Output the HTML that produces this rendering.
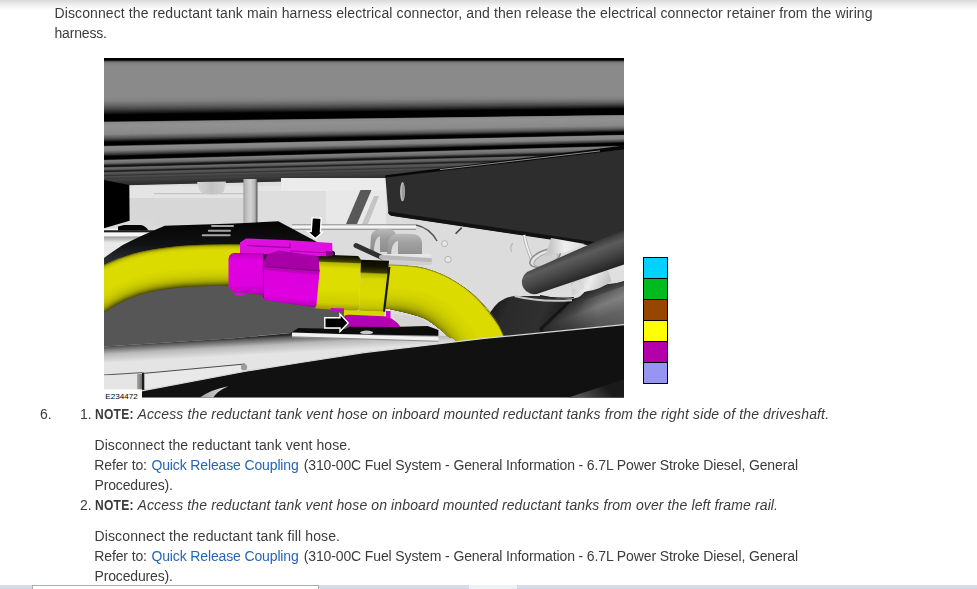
<!DOCTYPE html>
<html><head><meta charset="utf-8">
<style>
html,body{margin:0;padding:0;background:#fff;}
body{width:977px;height:589px;position:relative;overflow:hidden;font-family:"Liberation Sans",sans-serif;font-size:14px;color:#3b3b3b;}
.topshade{position:absolute;left:0;top:0;width:977px;height:11px;background:linear-gradient(#d9d9d9,#e7e7e7 27%,#f4f4f4 55%,#fcfcfc 82%,#fff);}
.t{position:absolute;white-space:nowrap;line-height:20px;height:20px;}
a{color:#2465b6;text-decoration:none;}
b{font-weight:bold;}
#fig{position:absolute;left:0;top:0;width:977px;height:589px;}
.sw{position:absolute;left:643px;width:23px;height:20px;border:1px solid #000;box-sizing:content-box;}
.bot{position:absolute;top:585px;height:4px;background:#d3dce7;}
#txt{position:absolute;left:0;top:0;width:977px;height:589px;will-change:transform;transform:translateZ(0);}
</style></head><body>
<div class="topshade"></div>
<svg id="fig" width="977" height="589" viewBox="0 0 977 589">
<defs><linearGradient id="g1" gradientUnits="userSpaceOnUse" x1="197.00" y1="0.00" x2="226.00" y2="0.00"><stop offset="0" stop-color="#d4d4d4"/><stop offset="0.5" stop-color="#c2c2c2"/><stop offset="1" stop-color="#d0d0d0"/></linearGradient><linearGradient id="g2" gradientUnits="userSpaceOnUse" x1="0.00" y1="236.50" x2="0.00" y2="242.50"><stop offset="0" stop-color="#9a9a9a"/><stop offset="1" stop-color="#e9e9e9"/></linearGradient><linearGradient id="g3" gradientUnits="userSpaceOnUse" x1="243.40" y1="0.00" x2="257.40" y2="0.00"><stop offset="0" stop-color="#9c9c9c"/><stop offset="0.15" stop-color="#b8b8b8"/><stop offset="0.5" stop-color="#d4d4d4"/><stop offset="0.82" stop-color="#b4b4b4"/><stop offset="0.92" stop-color="#808080"/><stop offset="1" stop-color="#3a3a3a"/></linearGradient><linearGradient id="g4" gradientUnits="userSpaceOnUse" x1="0.00" y1="225.00" x2="0.00" y2="262.00"><stop offset="0" stop-color="#060606"/><stop offset="0.55" stop-color="#111214"/><stop offset="1" stop-color="#2c2f36"/></linearGradient><linearGradient id="g5" gradientUnits="userSpaceOnUse" x1="0.00" y1="229.00" x2="0.00" y2="255.00"><stop offset="0" stop-color="#b8b8b8"/><stop offset="0.4" stop-color="#9a9a9a"/><stop offset="1" stop-color="#8a8a8a"/></linearGradient><linearGradient id="g6" gradientUnits="userSpaceOnUse" x1="0.00" y1="233.00" x2="0.00" y2="256.00"><stop offset="0" stop-color="#bcbcbc"/><stop offset="0.4" stop-color="#a2a2a2"/><stop offset="1" stop-color="#8e8e8e"/></linearGradient><linearGradient id="g7" gradientUnits="userSpaceOnUse" x1="551.00" y1="0.00" x2="585.00" y2="0.00"><stop offset="0" stop-color="#c8c8c8"/><stop offset="0.4" stop-color="#f0f0f0"/><stop offset="1" stop-color="#d8d8d8"/></linearGradient><linearGradient id="g8" gradientUnits="userSpaceOnUse" x1="490.00" y1="300.00" x2="560.00" y2="330.00"><stop offset="0" stop-color="#141414"/><stop offset="0.25" stop-color="#2a2a2a"/><stop offset="0.7" stop-color="#303030"/><stop offset="1" stop-color="#1a1a1a"/></linearGradient><linearGradient id="g9" gradientUnits="userSpaceOnUse" x1="588.00" y1="287.00" x2="606.00" y2="332.00"><stop offset="0" stop-color="#181818"/><stop offset="0.12" stop-color="#333"/><stop offset="0.45" stop-color="#6c6c6c"/><stop offset="0.7" stop-color="#4c4c4c"/><stop offset="1" stop-color="#3a3a3a"/></linearGradient><linearGradient id="g10" gradientUnits="userSpaceOnUse" x1="545.00" y1="0.00" x2="598.00" y2="0.00"><stop offset="0" stop-color="rgba(20,20,20,0.75)"/><stop offset="1" stop-color="rgba(20,20,20,0)"/></linearGradient><linearGradient id="g11" gradientUnits="userSpaceOnUse" x1="570.00" y1="0.00" x2="624.00" y2="0.00"><stop offset="0" stop-color="rgba(255,255,255,0)"/><stop offset="1" stop-color="rgba(255,255,255,0.16)"/></linearGradient><linearGradient id="g12" gradientUnits="userSpaceOnUse" x1="575.00" y1="275.00" x2="608.00" y2="290.00"><stop offset="0" stop-color="#c4c4c4"/><stop offset="0.45" stop-color="#ececec"/><stop offset="1" stop-color="#bdbdbd"/></linearGradient><linearGradient id="g13" gradientUnits="userSpaceOnUse" x1="560.00" y1="252.00" x2="572.00" y2="284.00"><stop offset="0" stop-color="#202020"/><stop offset="0.1" stop-color="#3c3c3c"/><stop offset="0.32" stop-color="#5c5c5c"/><stop offset="0.6" stop-color="#474747"/><stop offset="1" stop-color="#222"/></linearGradient><linearGradient id="g14" gradientUnits="userSpaceOnUse" x1="234.00" y1="338.00" x2="235.00" y2="356.00"><stop offset="0" stop-color="#2a2a2a"/><stop offset="0.12" stop-color="#5a5a5a"/><stop offset="0.5" stop-color="#b8b8b8"/><stop offset="1" stop-color="#e4e4e4"/></linearGradient><linearGradient id="g15" gradientUnits="userSpaceOnUse" x1="137.00" y1="0.00" x2="142.00" y2="0.00"><stop offset="0" stop-color="#a8a8a8"/><stop offset="1" stop-color="#707070"/></linearGradient><clipPath id="figclip"><rect x="104" y="58" width="520" height="339.6"/></clipPath><clipPath id="hoseR"><path d="M384.0,265.6C385.2,265.5 387.5,264.9 391.5,265.0C395.5,265.1 402.3,265.4 408.0,266.0C413.7,266.6 419.1,266.8 425.9,268.8C432.7,270.8 441.2,273.8 448.8,277.9C456.4,282.0 465.3,288.1 471.7,293.2C478.1,298.3 482.9,303.9 487.0,308.5C491.1,313.1 493.6,316.5 496.2,320.7C498.8,324.9 500.5,329.3 502.3,333.7C504.1,338.1 506.2,344.8 507.0,347.0L462.0,348.0C460.6,346.4 455.6,340.5 453.4,338.6C451.2,336.7 450.9,338.2 448.8,336.8C446.7,335.4 444.8,332.8 441.0,329.9C437.2,327.0 431.0,321.9 425.9,319.2C420.8,316.5 417.0,315.7 410.6,313.9C404.2,312.1 392.0,309.5 387.6,308.5C383.2,307.5 384.6,308.1 384.0,308.0Z"/></clipPath><linearGradient id="g16" gradientUnits="userSpaceOnUse" x1="0.00" y1="254.50" x2="0.00" y2="311.00"><stop offset="0" stop-color="#0a0a00"/><stop offset="0.07" stop-color="#2a2a00"/><stop offset="0.115" stop-color="#4a4a00"/><stop offset="0.135" stop-color="#b4b400"/><stop offset="0.23" stop-color="#dcdc00"/><stop offset="0.6" stop-color="#dddd00"/><stop offset="0.85" stop-color="#cdcd00"/><stop offset="1" stop-color="#8a8a00"/></linearGradient><linearGradient id="g17" gradientUnits="userSpaceOnUse" x1="0.00" y1="258.00" x2="0.00" y2="311.00"><stop offset="0" stop-color="#0a0a00"/><stop offset="0.12" stop-color="#141400"/><stop offset="0.23" stop-color="#3c3c00"/><stop offset="0.26" stop-color="#b4b400"/><stop offset="0.37" stop-color="#d8d800"/><stop offset="0.7" stop-color="#dada00"/><stop offset="0.9" stop-color="#c4c400"/><stop offset="1" stop-color="#909000"/></linearGradient><linearGradient id="g18" gradientUnits="userSpaceOnUse" x1="0.00" y1="252.00" x2="0.00" y2="296.00"><stop offset="0" stop-color="#7a007a"/><stop offset="0.06" stop-color="#c800c8"/><stop offset="0.2" stop-color="#e000e0"/><stop offset="0.75" stop-color="#df00df"/><stop offset="0.93" stop-color="#c000c0"/><stop offset="1" stop-color="#900090"/></linearGradient><linearGradient id="g19" gradientUnits="userSpaceOnUse" x1="291.00" y1="268.50" x2="287.80" y2="304.50"><stop offset="0" stop-color="#b400b4"/><stop offset="0.1" stop-color="#c400c4"/><stop offset="0.13" stop-color="#dc00dc"/><stop offset="0.8" stop-color="#e000e0"/><stop offset="0.95" stop-color="#c200c2"/><stop offset="1" stop-color="#9a009a"/></linearGradient><linearGradient id="g20" gradientUnits="userSpaceOnUse" x1="199.00" y1="0.00" x2="228.00" y2="0.00"><stop offset="0" stop-color="#9a9a9a"/><stop offset="1" stop-color="#e4e4e4"/></linearGradient><linearGradient id="g21" gradientUnits="userSpaceOnUse" x1="580.00" y1="398.00" x2="600.00" y2="380.00"><stop offset="0" stop-color="#555"/><stop offset="1" stop-color="#1a1a1a"/></linearGradient></defs>
<g clip-path="url(#figclip)">
<rect x="104" y="58" width="520" height="340" fill="#dcdcdc" />
<path d="M104,58.00L624,58.00V61.60L104,61.60Z" fill="#000"/>
<path d="M104,60.30L624,60.30V62.05L104,62.05Z" fill="#151515"/>
<path d="M104,60.75L624,60.75V62.50L104,62.50Z" fill="#404040"/>
<path d="M104,61.20L624,61.20V63.15L104,63.15Z" fill="#5f5f5f"/>
<path d="M104,61.85L624,61.85V63.80L104,63.80Z" fill="#747474"/>
<path d="M104,62.50L624,62.50V64.50L104,64.50Z" fill="#7f7f7f"/>
<path d="M104,63.20L624,63.20V65.20L104,65.20Z" fill="#828282"/>
<path d="M104,63.90L624,63.90V65.90L104,65.90Z" fill="#848484"/>
<path d="M104,64.60L624,64.60V66.60L104,66.60Z" fill="#868686"/>
<path d="M104,65.30L624,65.30V67.30L104,67.30Z" fill="#898989"/>
<path d="M104,66.00L624,66.00V96.80L104,98.30Z" fill="#8a8a8a"/>
<path d="M104,97.00L624,95.50V97.30L104,98.97Z" fill="#898989"/>
<path d="M104,97.67L624,96.00V97.80L104,99.63Z" fill="#888888"/>
<path d="M104,98.33L624,96.50V98.30L104,100.30Z" fill="#878787"/>
<path d="M104,99.00L624,97.00V98.80L104,100.97Z" fill="#858585"/>
<path d="M104,99.67L624,97.50V99.30L104,101.63Z" fill="#848484"/>
<path d="M104,100.33L624,98.00V99.80L104,102.30Z" fill="#838383"/>
<path d="M104,101.00L624,98.50V100.28L104,102.97Z" fill="#808080"/>
<path d="M104,101.67L624,98.98V100.77L104,103.63Z" fill="#7c7c7c"/>
<path d="M104,102.33L624,99.47V101.25L104,104.30Z" fill="#787878"/>
<path d="M104,103.00L624,99.95V101.73L104,104.97Z" fill="#747474"/>
<path d="M104,103.67L624,100.43V102.22L104,105.63Z" fill="#707070"/>
<path d="M104,104.33L624,100.92V102.70L104,106.30Z" fill="#6c6c6c"/>
<path d="M104,105.00L624,101.40V103.20L104,106.97Z" fill="#676767"/>
<path d="M104,105.67L624,101.90V103.70L104,107.63Z" fill="#626262"/>
<path d="M104,106.33L624,102.40V104.20L104,108.30Z" fill="#5c5c5c"/>
<path d="M104,107.00L624,102.90V104.70L104,108.97Z" fill="#565656"/>
<path d="M104,107.67L624,103.40V105.20L104,109.63Z" fill="#505050"/>
<path d="M104,108.33L624,103.90V105.70L104,110.30Z" fill="#4b4b4b"/>
<path d="M104,109.00L624,104.40V106.14L104,110.90Z" fill="#454545"/>
<path d="M104,109.60L624,104.84V106.58L104,111.50Z" fill="#3e3e3e"/>
<path d="M104,110.20L624,105.28V107.02L104,112.10Z" fill="#373737"/>
<path d="M104,110.80L624,105.72V107.46L104,112.70Z" fill="#303030"/>
<path d="M104,111.40L624,106.16V107.90L104,113.30Z" fill="#292929"/>
<path d="M104,112.00L624,106.60V108.32L104,113.88Z" fill="#222222"/>
<path d="M104,112.58L624,107.02V108.75L104,114.45Z" fill="#1b1b1b"/>
<path d="M104,113.15L624,107.45V109.17L104,115.02Z" fill="#131313"/>
<path d="M104,113.72L624,107.88V109.60L104,115.60Z" fill="#0c0c0c"/>
<path d="M104,114.30L624,108.30V109.95L104,116.10Z" fill="#060606"/>
<path d="M104,114.80L624,108.65V110.30L104,116.60Z" fill="#020202"/>
<path d="M104,115.30L624,109.00V116.30L104,122.70Z" fill="#000"/>
<path d="M104,121.40L624,115.00V116.40L104,123.10Z" fill="#222222"/>
<path d="M104,121.80L624,115.10V116.50L104,123.50Z" fill="#686868"/>
<path d="M104,122.20L624,115.20V117.05L104,124.13Z" fill="#8b8b8b"/>
<path d="M104,122.83L624,115.75V117.60L104,124.77Z" fill="#8c8c8c"/>
<path d="M104,123.47L624,116.30V118.15L104,125.40Z" fill="#8d8d8d"/>
<path d="M104,124.10L624,116.85V118.70L104,126.03Z" fill="#8f8f8f"/>
<path d="M104,124.73L624,117.40V119.25L104,126.67Z" fill="#909090"/>
<path d="M104,125.37L624,117.95V119.80L104,127.30Z" fill="#919191"/>
<path d="M104,126.00L624,118.50V120.38L104,127.97Z" fill="#929292"/>
<path d="M104,126.67L624,119.08V120.97L104,128.63Z" fill="#919191"/>
<path d="M104,127.33L624,119.67V121.55L104,129.30Z" fill="#909090"/>
<path d="M104,128.00L624,120.25V122.13L104,129.97Z" fill="#909090"/>
<path d="M104,128.67L624,120.83V122.72L104,130.63Z" fill="#8f8f8f"/>
<path d="M104,129.33L624,121.42V123.30L104,131.30Z" fill="#8e8e8e"/>
<path d="M104,130.00L624,122.00V123.88L104,131.97Z" fill="#8e8e8e"/>
<path d="M104,130.67L624,122.58V124.47L104,132.63Z" fill="#8d8d8d"/>
<path d="M104,131.33L624,123.17V125.05L104,133.30Z" fill="#8c8c8c"/>
<path d="M104,132.00L624,123.75V125.63L104,133.97Z" fill="#8c8c8c"/>
<path d="M104,132.67L624,124.33V126.22L104,134.63Z" fill="#8b8b8b"/>
<path d="M104,133.33L624,124.92V126.80L104,135.30Z" fill="#8a8a8a"/>
<path d="M104,134.00L624,125.50V127.34L104,135.94Z" fill="#868686"/>
<path d="M104,134.64L624,126.04V127.89L104,136.59Z" fill="#7f7f7f"/>
<path d="M104,135.29L624,126.59V128.43L104,137.23Z" fill="#777777"/>
<path d="M104,135.93L624,127.13V128.97L104,137.87Z" fill="#707070"/>
<path d="M104,136.57L624,127.67V129.51L104,138.51Z" fill="#686868"/>
<path d="M104,137.21L624,128.21V130.06L104,139.16Z" fill="#606060"/>
<path d="M104,137.86L624,128.76V130.60L104,139.80Z" fill="#595959"/>
<path d="M104,138.50L624,129.30V131.10L104,140.46Z" fill="#4e4e4e"/>
<path d="M104,139.16L624,129.80V131.60L104,141.12Z" fill="#3e3e3e"/>
<path d="M104,139.82L624,130.30V132.10L104,141.78Z" fill="#303030"/>
<path d="M104,140.48L624,130.80V132.60L104,142.44Z" fill="#202020"/>
<path d="M104,141.14L624,131.30V133.10L104,143.10Z" fill="#121212"/>
<path d="M104,141.80L624,131.80V133.50L104,143.80Z" fill="#050505"/>
<path d="M104,142.50L624,132.20V135.90L104,146.90Z" fill="#000"/>
<path d="M104,145.60L624,134.60V136.25L104,147.35Z" fill="#242424"/>
<path d="M104,146.05L624,134.95V136.60L104,147.80Z" fill="#6a6a6a"/>
<path d="M104,146.50L624,135.30V137.18L104,148.47Z" fill="#8d8d8d"/>
<path d="M104,147.17L624,135.88V137.77L104,149.13Z" fill="#8c8c8c"/>
<path d="M104,147.83L624,136.47V138.35L104,149.80Z" fill="#8a8a8a"/>
<path d="M104,148.50L624,137.05V138.93L104,150.47Z" fill="#888888"/>
<path d="M104,149.17L624,137.63V139.52L104,151.13Z" fill="#868686"/>
<path d="M104,149.83L624,138.22V140.10L104,151.80Z" fill="#858585"/>
<path d="M104,150.50L624,138.80V140.60L104,152.47Z" fill="#7e7e7e"/>
<path d="M104,151.17L624,139.30V141.10L104,153.13Z" fill="#727272"/>
<path d="M104,151.83L624,139.80V141.60L104,153.80Z" fill="#656565"/>
<path d="M104,152.50L624,140.30V142.10L104,154.47Z" fill="#595959"/>
<path d="M104,153.17L624,140.80V142.60L104,155.13Z" fill="#4c4c4c"/>
<path d="M104,153.83L624,141.30V143.10L104,155.80Z" fill="#404040"/>
<path d="M104,154.50L624,141.80V143.50L104,156.47Z" fill="#303030"/>
<path d="M104,155.17L624,142.20V143.90L104,157.13Z" fill="#1d1d1d"/>
<path d="M104,155.83L624,142.60V144.30L104,157.80Z" fill="#0a0a0a"/>
<path d="M104,156.50L624,143.00V146.90L104,160.90Z" fill="#000"/>
<path d="M104,159.60L624,145.60V147.25L104,161.30Z" fill="#212121"/>
<path d="M104,160.00L624,145.95V147.60L104,161.70Z" fill="#646464"/>
<path d="M104,160.40L624,146.30V148.30L104,162.32Z" fill="#828282"/>
<path d="M104,161.02L624,147.00V149.00L104,162.94Z" fill="#7e7e7e"/>
<path d="M104,161.64L624,147.70V149.70L104,163.56Z" fill="#787878"/>
<path d="M104,162.26L624,148.40V150.40L104,164.18Z" fill="#747474"/>
<path d="M104,162.88L624,149.10V151.10L104,164.80Z" fill="#6e6e6e"/>
<path d="M104,163.50L624,149.80V151.73L104,165.35Z" fill="#616161"/>
<path d="M104,164.05L624,150.43V152.35L104,165.90Z" fill="#4b4b4b"/>
<path d="M104,164.60L624,151.05V152.98L104,166.45Z" fill="#353535"/>
<path d="M104,165.15L624,151.68V153.60L104,167.00Z" fill="#1f1f1f"/>
<path d="M104,165.70L624,152.30V154.80L104,168.30Z" fill="#141414"/>
<path d="M104,167.00L624,153.50V155.15L104,168.70Z" fill="#2c2c2c"/>
<path d="M104,167.40L624,153.85V155.50L104,169.10Z" fill="#5a5a5a"/>
<path d="M104,167.80L624,154.20V156.10L104,169.65Z" fill="#6f6f6f"/>
<path d="M104,168.35L624,154.80V156.70L104,170.20Z" fill="#686868"/>
<path d="M104,168.90L624,155.40V157.30L104,170.75Z" fill="#626262"/>
<path d="M104,169.45L624,156.00V157.90L104,171.30Z" fill="#5b5b5b"/>
<path d="M104,170.00L624,156.60V158.60L104,171.90Z" fill="#484848"/>
<path d="M104,170.60L624,157.30V159.30L104,172.50Z" fill="#2a2a2a"/>
<path d="M104,171.20L624,158.00V160.00L104,173.20Z" fill="#1a1a1a"/>
<path d="M104,171.90L624,158.70V160.70L104,173.90Z" fill="#3c3c3c"/>
<path d="M104,172.60L624,159.40V161.40L104,174.50Z" fill="#5c5c5c"/>
<path d="M104,173.20L624,160.10V162.10L104,175.10Z" fill="#565656"/>
<path d="M104,173.80L624,160.80V162.80L104,175.70Z" fill="#525252"/>
<path d="M104,174.40L624,161.50V163.50L104,176.30Z" fill="#4c4c4c"/>
<path d="M104,175.00L624,162.20V164.20L104,177.00Z" fill="#353535"/>
<path d="M104,175.70L624,162.90V164.80L104,177.60Z" fill="#393939"/>
<path d="M104,176.30L624,163.50V165.48L104,178.28Z" fill="#4f4f4f"/>
<path d="M104,176.98L624,164.18V166.15L104,178.95Z" fill="#494949"/>
<path d="M104,177.65L624,164.85V166.82L104,179.62Z" fill="#434343"/>
<path d="M104,178.32L624,165.52V167.50L104,180.30Z" fill="#3d3d3d"/>
<path d="M104,179.00L624,166.20V168.10L104,180.90Z" fill="#3f3f3f"/>
<path d="M104,179.60L624,166.80V168.81L104,181.51Z" fill="#434343"/>
<path d="M104,180.21L624,167.51V169.53L104,182.12Z" fill="#404040"/>
<path d="M104,180.82L624,168.23V170.24L104,182.74Z" fill="#3d3d3d"/>
<path d="M104,181.44L624,168.94V170.95L104,183.35Z" fill="#3a3a3a"/>
<path d="M104,182.05L624,169.65V171.66L104,183.96Z" fill="#383838"/>
<path d="M104,182.66L624,170.36V172.38L104,184.58Z" fill="#353535"/>
<path d="M104,183.28L624,171.07V173.09L104,185.19Z" fill="#323232"/>
<path d="M104,183.89L624,171.79V173.80L104,185.80Z" fill="#2f2f2f"/>
<rect x="129" y="186" width="160" height="12" fill="#e4e4e4" />
<rect x="129" y="198" width="130" height="28" fill="#d7d7d7" />
<rect x="281" y="178" width="110" height="13" fill="#ebebeb" />
<rect x="257" y="191" width="69" height="35" fill="#dedede" />
<rect x="326" y="191" width="60" height="35" fill="#e8e8e8" />
<rect x="154" y="193.2" width="90" height="1" fill="#bdbdbd" />
<path d="M197,182 L226,181.5 L224,191 Q222,194.5 214,194.5 L206,194 Q200,193 199,189 Z" fill="url(#g1)" />
<rect x="104" y="220" width="50" height="12" fill="#d9d9d9" />
<rect x="104" y="228.6" width="20" height="1.4" fill="#f2f2f2" />
<rect x="104" y="232.4" width="52" height="4.2" fill="#f6f6f6" />
<rect x="104" y="236.5" width="52" height="6" fill="url(#g2)" />
<rect x="104" y="242.5" width="40" height="22" fill="#e9e9e9" />
<rect x="104" y="230.3" width="50" height="2" fill="#1e1e1e" />
<path d="M118,226.5 L124,225 L141,225 Q146,226 148.5,230.5 L118,230.5 Z" fill="#050505" />
<polygon points="104.0,180.0 129.3,185.0 129.6,220.8 104.0,228.3" fill="#000" />
<rect x="243.4" y="179" width="14" height="45" fill="url(#g3)" />
<polygon points="360.5,190.0 371.5,190.0 357.0,224.0 346.0,224.0" fill="#585858" />
<polygon points="374.0,196.0 379.0,196.0 368.0,224.0 362.0,224.0" fill="#c4c4c4" />
<rect x="292" y="224.3" width="124" height="1.2" fill="#8a8a8a" />
<rect x="292" y="225.5" width="124" height="3.2" fill="#f4f4f4" />
<rect x="292" y="228.7" width="124" height="1.3" fill="#9a9a9a" />
<polygon points="104.0,262.0 352.0,262.0 352.0,330.0 298.5,328.5 290.0,333.0 234.0,338.2 104.0,346.6" fill="#565656" />
<path d="M104,258 Q111.5,252.3 122.7,245 Q139.5,236.5 152.5,231 L164.7,225.7 L234,223.6 L278.3,221.2 L313.4,240 L335,252 L335,275 L104,275 Z" fill="url(#g4)" />
<rect x="211" y="225.1" width="23" height="1.9" fill="#a6a6a6" rx="1"/>
<rect x="207.8" y="229.79999999999998" width="23.19999999999999" height="1.9" fill="#a6a6a6" rx="1"/>
<rect x="201.7" y="234.29999999999998" width="29.0" height="1.9" fill="#a6a6a6" rx="1"/>
<path d="M370,252 L371,236 Q373,229 381,229 L391,229.5 Q396,231 396.5,237 L396.5,252 Z" fill="url(#g5)" />
<path d="M387,256 L388,241 Q390,234 399,233.7 L414,234 Q421,235.5 422,242 L422,256 Z" fill="url(#g6)" />
<path d="M374,252 Q374,238 380,236 L380,252 Z" fill="#d8d8d8" />
<path d="M391,256 Q391,243 398,240.5 L398,256 Z" fill="#dadada" />
<rect x="381" y="254" width="51" height="11" fill="#cfcfcf" rx="2"/>
<rect x="381" y="254" width="51" height="4" fill="#e6e6e6" rx="2"/>
<path d="M356,245.5 L381,257" fill="none" stroke="#303030" stroke-width="5" stroke-linecap="round"/>
<path d="M381,257 L430,260" fill="none" stroke="#b9b9b9" stroke-width="4" stroke-linecap="round"/>
<path d="M416,225 Q430,228 437,241" fill="none" stroke="#555" stroke-width="1.5"/>
<path d="M455.6,233.7 L461.7,227.6" fill="none" stroke="#444" stroke-width="1.6"/>
<circle cx="444.6" cy="243.6" r="3" fill="#e6e6e6" stroke="#b4b4b4" stroke-width="1"/>
<circle cx="448" cy="259.5" r="3.2" fill="#e6e6e6" stroke="#b4b4b4" stroke-width="1"/>
<polygon points="385.4,177.2 624.0,149.3 624.0,250.0 391.0,215.6 388.4,213.5" fill="#2d2d2d" />
<polygon points="385.4,177.6 624.0,149.6 624.0,145.6 385.4,175.2" fill="#080808" />
<path d="M440,169.6 L600,150.9" fill="none" stroke="#8e8e8e" stroke-width="1"/>
<polygon points="388.2,211.5 624.0,246.3 624.0,250.4 391.0,215.8 388.6,214.0" fill="#121212" />
<ellipse cx="402.5" cy="191.7" rx="2.4" ry="9.6" fill="#bebebe"/>
<ellipse cx="403.2" cy="191.7" rx="1.4" ry="8.6" fill="#9a9a9a"/>
<path d="M524,235 Q527,250 534,264" fill="none" stroke="#b0b0b0" stroke-width="3.4"/>
<path d="M524,235 Q527,250 534,264" fill="none" stroke="#ececec" stroke-width="1.8"/>
<ellipse cx="545" cy="258" rx="16" ry="7.5" fill="#e4e4e4" stroke="#8e8e8e" stroke-width="1.6" transform="rotate(-22 545 258)"/>
<ellipse cx="546" cy="259.5" rx="13" ry="5.5" fill="#d0d0d0" stroke="#a4a4a4" stroke-width="1" transform="rotate(-22 546 259.5)"/>
<path d="M513,243 q-4,4 -1,9" fill="none" stroke="#b8b8b8" stroke-width="1.2"/>
<polygon points="551.0,238.0 585.0,244.0 566.0,252.0 545.0,256.0" fill="url(#g7)" />
<path d="M486,320 Q494,303 505,298.4 Q510,296.5 514.6,296 L574,296 L624,281 L624,345 L470,345 Z" fill="url(#g8)" />
<path d="M543.7,326 Q552,318 559.8,311.3 Q570,300 580.8,293.5 Q592,288 603,284.7 L624,282 L624,345 L540,345 Z" fill="url(#g9)" />
<path d="M541,329 Q552,318 559.8,311.3 Q568,302 578,295" fill="none" stroke="#0c0c0c" stroke-width="3" opacity="0.75" stroke-linecap="round"/>
<path d="M541,329 Q552,318 559.8,311.3 Q570,300 580.8,293.5 L600,290 L600,345 L535,345 Z" fill="url(#g10)" />
<path d="M585,300 L624,286 L624,330 L560,340 Z" fill="url(#g11)" />
<path d="M537,293.5 Q560,287 585.6,290 Q582,297 574,298.6 Q552,300 537,293.5 Z" fill="#dedede" />
<path d="M514.6,296 Q540,302.5 572,300.2" fill="none" stroke="#c6c6c6" stroke-width="2"/>
<path d="M540,295.5 Q556,299.5 574,297.5" fill="none" stroke="#1c1c1c" stroke-width="1.2"/>
<path d="M571,283 L597,271 L608,269.5 L611.5,281 Q600,290 586,291.5 L572,296 Z" fill="url(#g12)" />
<path d="M571,288.7 Q572,281.5 578,281.5 Q584,282 584.5,289 Z" fill="#dadada" />
<polygon points="611.5,281.0 608.0,269.5 624.0,263.5 624.0,279.0" fill="#e0e0e0" />
<path d="M527,272 L624,229 L624,264.5 L539,293.3 A12.3,12.3 0 0 1 527,272 Z" fill="url(#g13)" />
<polygon points="298.4,328.0 345.0,329.0 352.0,325.5 400.0,326.5 427.0,325.8 438.4,330.0 438.4,338.0 292.0,333.4 290.0,333.0" fill="#0c0c0c" />
<ellipse cx="366.6" cy="332.4" rx="6.5" ry="1.8" fill="#c8c8c8"/>
<polygon points="104.0,346.6 234.0,338.2 291.0,333.0 450.0,336.0 484.0,338.0 484.0,360.0 104.0,392.0" fill="url(#g14)" />
<polygon points="292.0,332.6 438.4,337.2 438.4,341.3 292.0,336.9" fill="#f2f2f2" />
<path d="M292,336.9 L438.4,341.3" fill="none" stroke="#8c8c8c" stroke-width="1.1"/>
<polygon points="392.0,314.0 420.0,317.0 431.0,326.0 400.0,326.5" fill="#d4d4d4" />
<path d="M104,375 L142,372.6" fill="none" stroke="#555" stroke-width="1"/>
<rect x="104" y="375.4" width="38" height="16" fill="#e5e5e5" />
<rect x="137" y="374" width="5" height="17" fill="url(#g15)" />
<rect x="142" y="372.6" width="2.6" height="18" fill="#1c1c1c" />
<polygon points="144.5,373.3 245.0,364.0 247.3,370.5 144.5,389.2" fill="#e9e9e9" />
<path d="M144.5,373.3 L245,364" fill="none" stroke="#4a4a4a" stroke-width="1"/>
<rect x="241" y="364.3" width="6" height="6" fill="#9c9c9c" rx="2"/>
<path d="M 84,302 C 120,272 160,264 240,265" fill="none" stroke="#505000" stroke-width="41.5" transform="translate(-0.00,-0.00)"/>
<path d="M 84,302 C 120,272 160,264 240,265" fill="none" stroke="#585800" stroke-width="41.0" transform="translate(-0.01,-0.12)"/>
<path d="M 84,302 C 120,272 160,264 240,265" fill="none" stroke="#606000" stroke-width="40.5" transform="translate(-0.02,-0.24)"/>
<path d="M 84,302 C 120,272 160,264 240,265" fill="none" stroke="#686800" stroke-width="40.0" transform="translate(-0.04,-0.36)"/>
<path d="M 84,302 C 120,272 160,264 240,265" fill="none" stroke="#6f6f00" stroke-width="39.6" transform="translate(-0.05,-0.48)"/>
<path d="M 84,302 C 120,272 160,264 240,265" fill="none" stroke="#777700" stroke-width="39.1" transform="translate(-0.06,-0.61)"/>
<path d="M 84,302 C 120,272 160,264 240,265" fill="none" stroke="#7e7e00" stroke-width="38.6" transform="translate(-0.07,-0.73)"/>
<path d="M 84,302 C 120,272 160,264 240,265" fill="none" stroke="#858500" stroke-width="38.0" transform="translate(-0.09,-0.86)"/>
<path d="M 84,302 C 120,272 160,264 240,265" fill="none" stroke="#8d8d00" stroke-width="37.5" transform="translate(-0.10,-1.00)"/>
<path d="M 84,302 C 120,272 160,264 240,265" fill="none" stroke="#949400" stroke-width="36.9" transform="translate(-0.11,-1.14)"/>
<path d="M 84,302 C 120,272 160,264 240,265" fill="none" stroke="#9a9a00" stroke-width="36.4" transform="translate(-0.13,-1.28)"/>
<path d="M 84,302 C 120,272 160,264 240,265" fill="none" stroke="#a0a000" stroke-width="35.8" transform="translate(-0.14,-1.42)"/>
<path d="M 84,302 C 120,272 160,264 240,265" fill="none" stroke="#a6a600" stroke-width="35.3" transform="translate(-0.16,-1.56)"/>
<path d="M 84,302 C 120,272 160,264 240,265" fill="none" stroke="#abab00" stroke-width="34.6" transform="translate(-0.17,-1.73)"/>
<path d="M 84,302 C 120,272 160,264 240,265" fill="none" stroke="#b0b000" stroke-width="33.9" transform="translate(-0.19,-1.90)"/>
<path d="M 84,302 C 120,272 160,264 240,265" fill="none" stroke="#b5b500" stroke-width="33.2" transform="translate(-0.21,-2.07)"/>
<path d="M 84,302 C 120,272 160,264 240,265" fill="none" stroke="#b9b900" stroke-width="32.4" transform="translate(-0.23,-2.28)"/>
<path d="M 84,302 C 120,272 160,264 240,265" fill="none" stroke="#bdbd00" stroke-width="31.5" transform="translate(-0.25,-2.49)"/>
<path d="M 84,302 C 120,272 160,264 240,265" fill="none" stroke="#c1c100" stroke-width="30.7" transform="translate(-0.27,-2.70)"/>
<path d="M 84,302 C 120,272 160,264 240,265" fill="none" stroke="#c4c400" stroke-width="29.7" transform="translate(-0.29,-2.94)"/>
<path d="M 84,302 C 120,272 160,264 240,265" fill="none" stroke="#c8c800" stroke-width="28.8" transform="translate(-0.32,-3.18)"/>
<path d="M 84,302 C 120,272 160,264 240,265" fill="none" stroke="#cbcb00" stroke-width="27.8" transform="translate(-0.34,-3.42)"/>
<path d="M 84,302 C 120,272 160,264 240,265" fill="none" stroke="#cdcd00" stroke-width="26.7" transform="translate(-0.37,-3.70)"/>
<path d="M 84,302 C 120,272 160,264 240,265" fill="none" stroke="#d0d000" stroke-width="25.6" transform="translate(-0.40,-3.98)"/>
<path d="M 84,302 C 120,272 160,264 240,265" fill="none" stroke="#d2d200" stroke-width="24.5" transform="translate(-0.43,-4.25)"/>
<path d="M 84,302 C 120,272 160,264 240,265" fill="none" stroke="#d4d400" stroke-width="23.2" transform="translate(-0.46,-4.57)"/>
<path d="M 84,302 C 120,272 160,264 240,265" fill="none" stroke="#d5d500" stroke-width="22.0" transform="translate(-0.49,-4.88)"/>
<path d="M 84,302 C 120,272 160,264 240,265" fill="none" stroke="#d7d700" stroke-width="20.8" transform="translate(-0.52,-5.19)"/>
<path d="M 84,302 C 120,272 160,264 240,265" fill="none" stroke="#d8d800" stroke-width="19.4" transform="translate(-0.55,-5.53)"/>
<path d="M 84,302 C 120,272 160,264 240,265" fill="none" stroke="#dada00" stroke-width="18.0" transform="translate(-0.59,-5.88)"/>
<path d="M 84,302 C 120,272 160,264 240,265" fill="none" stroke="#dbdb00" stroke-width="16.6" transform="translate(-0.62,-6.22)"/>
<g clip-path="url(#hoseR)">
<path d="M 380,286 C 420,286 452,297 484,351" fill="none" stroke="#505000" stroke-width="52.0" transform="translate(0.00,-0.00)"/>
<path d="M 380,286 C 420,286 452,297 484,351" fill="none" stroke="#585800" stroke-width="51.4" transform="translate(0.20,-0.18)"/>
<path d="M 380,286 C 420,286 452,297 484,351" fill="none" stroke="#606000" stroke-width="50.8" transform="translate(0.40,-0.35)"/>
<path d="M 380,286 C 420,286 452,297 484,351" fill="none" stroke="#686800" stroke-width="50.2" transform="translate(0.60,-0.53)"/>
<path d="M 380,286 C 420,286 452,297 484,351" fill="none" stroke="#6f6f00" stroke-width="49.6" transform="translate(0.80,-0.70)"/>
<path d="M 380,286 C 420,286 452,297 484,351" fill="none" stroke="#777700" stroke-width="49.0" transform="translate(1.00,-0.88)"/>
<path d="M 380,286 C 420,286 452,297 484,351" fill="none" stroke="#7e7e00" stroke-width="48.4" transform="translate(1.20,-1.06)"/>
<path d="M 380,286 C 420,286 452,297 484,351" fill="none" stroke="#858500" stroke-width="47.7" transform="translate(1.43,-1.26)"/>
<path d="M 380,286 C 420,286 452,297 484,351" fill="none" stroke="#8d8d00" stroke-width="47.0" transform="translate(1.66,-1.46)"/>
<path d="M 380,286 C 420,286 452,297 484,351" fill="none" stroke="#949400" stroke-width="46.3" transform="translate(1.89,-1.66)"/>
<path d="M 380,286 C 420,286 452,297 484,351" fill="none" stroke="#9a9a00" stroke-width="45.6" transform="translate(2.12,-1.86)"/>
<path d="M 380,286 C 420,286 452,297 484,351" fill="none" stroke="#a0a000" stroke-width="44.9" transform="translate(2.35,-2.06)"/>
<path d="M 380,286 C 420,286 452,297 484,351" fill="none" stroke="#a6a600" stroke-width="44.2" transform="translate(2.57,-2.27)"/>
<path d="M 380,286 C 420,286 452,297 484,351" fill="none" stroke="#abab00" stroke-width="43.3" transform="translate(2.86,-2.52)"/>
<path d="M 380,286 C 420,286 452,297 484,351" fill="none" stroke="#b0b000" stroke-width="42.5" transform="translate(3.15,-2.77)"/>
<path d="M 380,286 C 420,286 452,297 484,351" fill="none" stroke="#b5b500" stroke-width="41.6" transform="translate(3.43,-3.02)"/>
<path d="M 380,286 C 420,286 452,297 484,351" fill="none" stroke="#b9b900" stroke-width="40.6" transform="translate(3.78,-3.32)"/>
<path d="M 380,286 C 420,286 452,297 484,351" fill="none" stroke="#bdbd00" stroke-width="39.5" transform="translate(4.12,-3.62)"/>
<path d="M 380,286 C 420,286 452,297 484,351" fill="none" stroke="#c1c100" stroke-width="38.5" transform="translate(4.46,-3.93)"/>
<path d="M 380,286 C 420,286 452,297 484,351" fill="none" stroke="#c4c400" stroke-width="37.3" transform="translate(4.86,-4.28)"/>
<path d="M 380,286 C 420,286 452,297 484,351" fill="none" stroke="#c8c800" stroke-width="36.1" transform="translate(5.26,-4.63)"/>
<path d="M 380,286 C 420,286 452,297 484,351" fill="none" stroke="#cbcb00" stroke-width="34.8" transform="translate(5.66,-4.98)"/>
<path d="M 380,286 C 420,286 452,297 484,351" fill="none" stroke="#cdcd00" stroke-width="33.5" transform="translate(6.12,-5.39)"/>
<path d="M 380,286 C 420,286 452,297 484,351" fill="none" stroke="#d0d000" stroke-width="32.1" transform="translate(6.58,-5.79)"/>
<path d="M 380,286 C 420,286 452,297 484,351" fill="none" stroke="#d2d200" stroke-width="30.7" transform="translate(7.04,-6.19)"/>
<path d="M 380,286 C 420,286 452,297 484,351" fill="none" stroke="#d4d400" stroke-width="29.1" transform="translate(7.55,-6.64)"/>
<path d="M 380,286 C 420,286 452,297 484,351" fill="none" stroke="#d5d500" stroke-width="27.6" transform="translate(8.07,-7.10)"/>
<path d="M 380,286 C 420,286 452,297 484,351" fill="none" stroke="#d7d700" stroke-width="26.0" transform="translate(8.58,-7.55)"/>
<path d="M 380,286 C 420,286 452,297 484,351" fill="none" stroke="#d8d800" stroke-width="24.3" transform="translate(9.15,-8.05)"/>
<path d="M 380,286 C 420,286 452,297 484,351" fill="none" stroke="#dada00" stroke-width="22.5" transform="translate(9.72,-8.56)"/>
<path d="M 380,286 C 420,286 452,297 484,351" fill="none" stroke="#dbdb00" stroke-width="20.8" transform="translate(10.30,-9.06)"/>
</g>
<path d="M384.0,265.6C385.2,265.5 387.5,264.9 391.5,265.0C395.5,265.1 402.3,265.4 408.0,266.0C413.7,266.6 419.1,266.8 425.9,268.8C432.7,270.8 441.2,273.8 448.8,277.9C456.4,282.0 465.3,288.1 471.7,293.2C478.1,298.3 482.9,303.9 487.0,308.5C491.1,313.1 493.6,316.5 496.2,320.7C498.8,324.9 500.5,329.3 502.3,333.7C504.1,338.1 506.2,344.8 507.0,347.0" fill="none" stroke="#6a6a00" stroke-width="0.8" opacity="0.8"/>
<g transform="rotate(2.2 316 285)">
<path d="M316,254.5 L357,254.5 L360,258 L360,306 Q360,309.5 355,309.5 L316,308.5 Z" fill="url(#g16)" />
<path d="M360,258 L388,258 L385.5,309 L360,309 Z" fill="url(#g17)" />
<path d="M345,309 L385.5,309 L385.5,315 L345,315.5 Z" fill="#d6d600" />
<path d="M388.6,264 L385,309" fill="none" stroke="#15150a" stroke-width="2.2"/>
</g>
<path d="M344,319 Q343,314.5 349.5,314.8 L388,316.5 Q398,322 400.7,327 L352,326.8 Q345,326 344,319 Z" fill="#b400b4" />
<polygon points="330.8,308.0 344.0,308.4 344.0,311.5 331.0,311.0" fill="#d000d0" />
<polygon points="386.0,311.0 390.5,311.0 390.5,318.0 386.0,318.0" fill="#d800d8" />
<polygon points="234.0,292.3 244.5,293.5 244.0,296.3 235.0,295.5" fill="#e000e0" />
<polygon points="240.0,242.5 246.0,238.4 290.0,240.2 332.2,242.9 332.5,254.8 325.0,256.2 240.0,253.2" fill="#df10df" />
<path d="M247,245.5 L290,247.5 L290,243" fill="none" stroke="#9c009c" stroke-width="1.2"/>
<path d="M290,251 L331,253" fill="none" stroke="#a800a8" stroke-width="1"/>
<polygon points="326.0,251.0 332.0,251.5 332.0,256.0 326.0,256.5" fill="#8a008a" />
<path d="M228.5,259 Q229,253 235,253 L263.6,253.6 L263.6,295.2 L234,291.6 Q228.8,290.5 228.5,285 Z" fill="url(#g18)" />
<polygon points="263.2,262.0 268.0,254.0 279.0,250.6 318.6,256.4 319.6,271.0 263.2,266.5" fill="#a600a6" />
<path d="M263.2,266.3 L319.6,270.8 L316.4,305.5 Q316,307.5 313,307 L266,300.6 Q263.2,300 263.2,297 Z" fill="url(#g19)" />
<path d="M263.4,266.3 L319.6,270.8" fill="none" stroke="#7c007c" stroke-width="1"/>
<path d="M263.4,253.6 L263.4,298" fill="none" stroke="#8a008a" stroke-width="1"/>
<polygon points="141.5,390.9 247.0,371.0 304.0,362.0 364.0,352.6 484.0,338.4 624.0,324.6 624.0,398.0 141.5,398.0" fill="#111" />
<path d="M141.5,390.9 L247,371 L304,362 L364,352.6 L484,338.4 L624,324.6" fill="none" stroke="#d8d8d8" stroke-width="1.2"/>
<path d="M199,398 Q211,389.5 228.5,386.3 Q217,391 213,398 Z" fill="url(#g20)" />
<polygon points="567.0,398.0 624.0,379.6 624.0,398.0" fill="url(#g21)" />
<polygon points="312.2,217.6 321.2,218.3 320.4,232.0 322.4,232.3 315.3,238.6 307.4,231.4 311.2,231.6" fill="#000" stroke="#fff" stroke-width="1.4" stroke-linejoin="miter"/>
<polygon points="324.8,317.8 340.0,317.8 340.0,314.0 348.2,323.0 340.0,331.6 340.0,328.0 324.8,328.0" fill="#000" stroke="#fff" stroke-width="1.4"/>
</g>
<rect x="104" y="389.3" width="38" height="11" fill="#fff"/>
<text x="105.3" y="398.8" font-family="Liberation Sans, sans-serif" font-size="8" fill="#000" textLength="32.5" lengthAdjust="spacingAndGlyphs">E234472</text>
</svg>
<div class="sw" style="top:257px;background:#00d2ff"></div>
<div class="sw" style="top:278px;background:#00bb1e"></div>
<div class="sw" style="top:299px;background:#964600"></div>
<div class="sw" style="top:320px;background:#ffff00"></div>
<div class="sw" style="top:341px;background:#b400aa"></div>
<div class="sw" style="top:362px;background:#9696f0"></div>
<div id="txt">
<div class="t" id="l1" style="left:54.5px;top:3px;letter-spacing:0.109px;">Disconnect the reductant tank main harness electrical connector, and then release the electrical connector retainer from the wiring</div>
<div class="t" id="l2" style="left:54.5px;top:23px;letter-spacing:-0.172px;">harness.</div>
<div class="t" id="n6" style="left:40px;top:404px;letter-spacing:0.013px;">6.</div>
<div class="t" id="n1" style="left:80px;top:404px;letter-spacing:0.013px;">1.</div>
<div class="t" id="l3a" style="left:94.5px;top:404px;letter-spacing:0.284px;"><b style="display:inline-block;transform:scaleX(0.86);transform-origin:0 0;">NOTE:</b></div>
<div class="t" id="l3b" style="left:137.5px;top:404px;letter-spacing:0.134px;"><i>Access the reductant tank vent hose on inboard mounted reductant tanks from the right side of the driveshaft.</i></div>
<div class="t" id="l4" style="left:94.5px;top:435px;letter-spacing:0.071px;">Disconnect the reductant tank vent hose.</div>
<div class="t" id="l5a" style="left:94.3px;top:455px;letter-spacing:-0.125px;">Refer to:</div>
<div class="t" id="l5b" style="left:151.4px;top:455px;letter-spacing:-0.133px;"><a>Quick Release Coupling</a></div>
<div class="t" id="l5c" style="left:303.7px;top:455px;letter-spacing:-0.122px;">(310-00C Fuel System - General Information - 6.7L Power Stroke Diesel, General</div>
<div class="t" id="l6" style="left:94.5px;top:475px;letter-spacing:-0.151px;">Procedures).</div>
<div class="t" id="n2" style="left:80px;top:495px;letter-spacing:0.013px;">2.</div>
<div class="t" id="l7a" style="left:94.5px;top:495px;letter-spacing:0.284px;"><b style="display:inline-block;transform:scaleX(0.86);transform-origin:0 0;">NOTE:</b></div>
<div class="t" id="l7b" style="left:137.5px;top:495px;letter-spacing:0.117px;"><i>Access the reductant tank vent hose on inboard mounted reductant tanks from over the left frame rail.</i></div>
<div class="t" id="l8" style="left:94.5px;top:526px;letter-spacing:0.129px;">Disconnect the reductant tank fill hose.</div>
<div class="t" id="l9a" style="left:94.3px;top:546px;letter-spacing:-0.125px;">Refer to:</div>
<div class="t" id="l9b" style="left:151.4px;top:546px;letter-spacing:-0.133px;"><a>Quick Release Coupling</a></div>
<div class="t" id="l9c" style="left:303.7px;top:546px;letter-spacing:-0.122px;">(310-00C Fuel System - General Information - 6.7L Power Stroke Diesel, General</div>
<div class="t" id="l10" style="left:94.5px;top:566px;letter-spacing:-0.151px;">Procedures).</div>
</div>
<div class="bot" style="left:0;width:977px;"></div>
<div class="bot" style="left:32px;width:287px;background:#fff;border:1px solid #a9adb3;border-bottom:0;box-sizing:border-box;"></div>
<div class="bot" style="left:469px;width:48px;background:#eef1f6;"></div>
</body></html>
